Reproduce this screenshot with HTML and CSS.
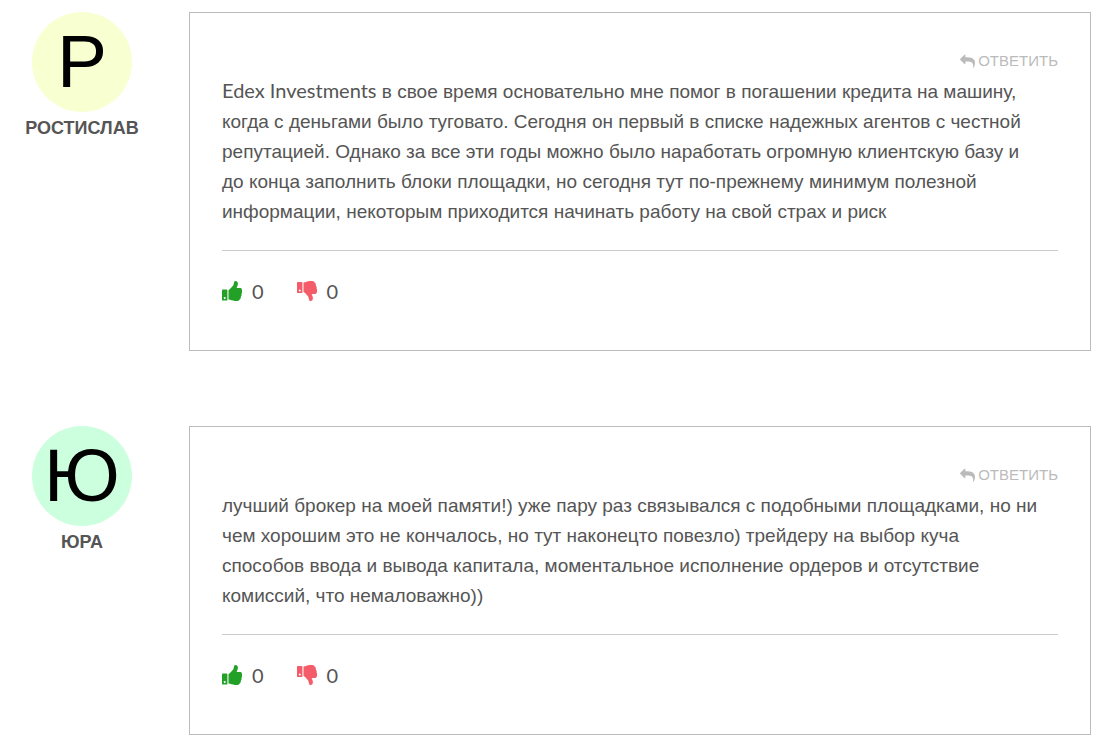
FILE: index.html
```html
<!DOCTYPE html>
<html lang="ru">
<head>
    <meta charset="UTF-8">
    <meta name="viewport" content="width=device-width, initial-scale=1.0">
    <title>Отзывы</title>
    <link rel="stylesheet" href="styles.css">
</head>
<body>
    <svg class="sprite" aria-hidden="true">
        <symbol id="reply" viewBox="0 0 1792 1792">
            <path d="M1792 1120q0 166-127 451-3 7-10.500 24t-13.500 30-13 22q-12 17-28 17-15 0-23.500-10t-8.500-25q0-9 2.500-26.500t2.500-23.500q5-68 5-123 0-101-17.500-181t-48.500-138.500-80-101-105.500-69.500-133-42.500-154-21.500-175.500-6h-224v256q0 26-19 45t-45 19-45-19l-512-512q-19-19-19-45t19-45l512-512q19-19 45-19t45 19 19 45v256h224q713 0 875 403 53 134 53 333z"/>
        </symbol>
        <symbol id="thumb-up" viewBox="0 0 20 20">
            <path fill-rule="evenodd" d="M0 9.300q0-.9.900-.9h3.600q.9 0 .9.900v9.400q0 .9-.9.900H.9q-.9 0-.9-.9zM2.700 16a1 1 0 1 0 .1 0z"/>
            <path d="M6.500 9C8.300 8.100 9.500 6.300 10.900 4.800c1.200-1.300.8-4.500 2.200-4.700 2.600-.2 3.300 2.300 2.500 4.300l-1 2.700h3.500c1.500 0 2.300 1.500 1.800 2.800.4 1.100.1 2.200-.4 2.900.3 1.200 0 2.200-.7 2.900.2 1.300-.3 2.300-1.100 2.800-.7 1.500-2.800 1.600-5 1.400-2.400-.2-4-1.200-6.200-1.400z"/>
        </symbol>
        <symbol id="thumb-down" viewBox="0 0 20 20">
            <path fill-rule="evenodd" d="M0 1.800q0-.9.900-.9h3.600q.9 0 .9.900v9.400q0 .9-.9.900H.9q-.9 0-.9-.9zM2.700 8.600a1 1 0 1 0 .1 0z"/>
            <path d="M6.500 11c1.800.9 3 2.700 4.400 4.200 1.200 1.300.8 4.500 2.200 4.700 2.600.2 3.300-2.300 2.500-4.300l-1-2.700h3.500c1.500 0 2.300-1.500 1.800-2.800.4-1.100.1-2.200-.4-2.900.3-1.200 0-2.200-.7-2.900.2-1.300-.3-2.300-1.100-2.800-.7-1.500-2.800-1.600-5-1.400-2.400.2-4 1.200-6.200 1.400z"/>
        </symbol>
    </svg>

    <main class="comments">
        <article class="comment">
            <div class="author">
                <div class="avatar avatar-yellow">Р</div>
                <div class="name">Ростислав</div>
            </div>
            <div class="content">
                <a class="reply" href="#"><svg class="reply-icon"><use href="#reply"/></svg>Ответить</a>
                <p class="text"><span class="brand">Edex Investments</span> в свое время основательно мне помог в погашении кредита на машину, когда с деньгами было туговато. Сегодня он первый в списке надежных агентов с честной репутацией. Однако за все эти годы можно было наработать огромную клиентскую базу и<br> до конца заполнить блоки площадки, но сегодня тут по-прежнему минимум полезной<br> информации, некоторым приходится начинать работу на свой страх и риск</p>
                <div class="votes">
                    <button class="vote like" type="button" aria-label="Нравится"><svg class="vote-icon"><use href="#thumb-up"/></svg>0</button>
                    <button class="vote dislike" type="button" aria-label="Не нравится"><svg class="vote-icon"><use href="#thumb-down"/></svg>0</button>
                </div>
            </div>
        </article>

        <article class="comment">
            <div class="author">
                <div class="avatar avatar-green">Ю</div>
                <div class="name">Юра</div>
            </div>
            <div class="content">
                <a class="reply" href="#"><svg class="reply-icon"><use href="#reply"/></svg>Ответить</a>
                <p class="text">лучший брокер на моей памяти!) уже пару раз связывался с подобными площадками, но ни чем хорошим это не кончалось, но тут наконецто повезло) трейдеру на выбор куча<br> способов ввода и вывода капитала, моментальное исполнение ордеров и отсутствие<br> комиссий, что немаловажно))</p>
                <div class="votes">
                    <button class="vote like" type="button" aria-label="Нравится"><svg class="vote-icon"><use href="#thumb-up"/></svg>0</button>
                    <button class="vote dislike" type="button" aria-label="Не нравится"><svg class="vote-icon"><use href="#thumb-down"/></svg>0</button>
                </div>
            </div>
        </article>
    </main>
</body>
</html>
```

FILE: styles.css
```css
body {
    margin: 0;
    background-color: #fff;
    color: #555;
    font-family: "Liberation Sans", Arial, sans-serif;
    font-size: 19px;
    line-height: 30px;
}
.sprite {
    display: none;
}
.comments {
    display: flex;
    flex-direction: column;
    gap: 75px;
    padding: 12px 14px 14px 0;
}
.comment {
    display: flex;
    align-items: flex-start;
    gap: 25px;
}
.author {
    flex: 0 0 164px;
    display: flex;
    flex-direction: column;
    align-items: center;
}
.avatar {
    width: 100px;
    height: 100px;
    border-radius: 50%;
    color: #000;
    font-size: 75px;
    line-height: 98px;
    text-align: center;
}
.avatar-yellow {
    background-color: #f8ffd0;
}
.avatar-green {
    background-color: #ccffde;
}
.name {
    font-size: 18px;
    font-weight: 700;
    line-height: 32px;
    text-transform: uppercase;
}
.content {
    flex: 1;
    display: flex;
    flex-direction: column;
    padding: 32px;
    border: 1px solid #bbb;
}
.reply {
    display: flex;
    align-items: center;
    align-self: flex-end;
    gap: 3px;
    color: #bbb;
    font-size: 15px;
    line-height: 32px;
    text-decoration: none;
    text-transform: uppercase;
}
.reply-icon {
    width: 15px;
    height: 15px;
    fill: currentColor;
}
.text {
    margin: 0;
    padding-bottom: 23px;
    border-bottom: 1px solid #ccc;
}
.brand {
    font-family: Lato, sans-serif;
    font-size: 20px;
    line-height: 1;
}
.votes {
    display: flex;
    gap: 33px;
    padding: 25px 0 12px;
}
.vote {
    display: flex;
    align-items: center;
    gap: 10px;
    padding: 0;
    border: none;
    background: none;
    color: inherit;
    font-family: Lato, sans-serif;
    font-size: 20px;
    line-height: 30px;
    cursor: pointer;
}
.vote-icon {
    width: 20px;
    height: 20px;
}
.like .vote-icon {
    fill: #23a127;
}
.dislike .vote-icon {
    fill: #f35c68;
}
```
